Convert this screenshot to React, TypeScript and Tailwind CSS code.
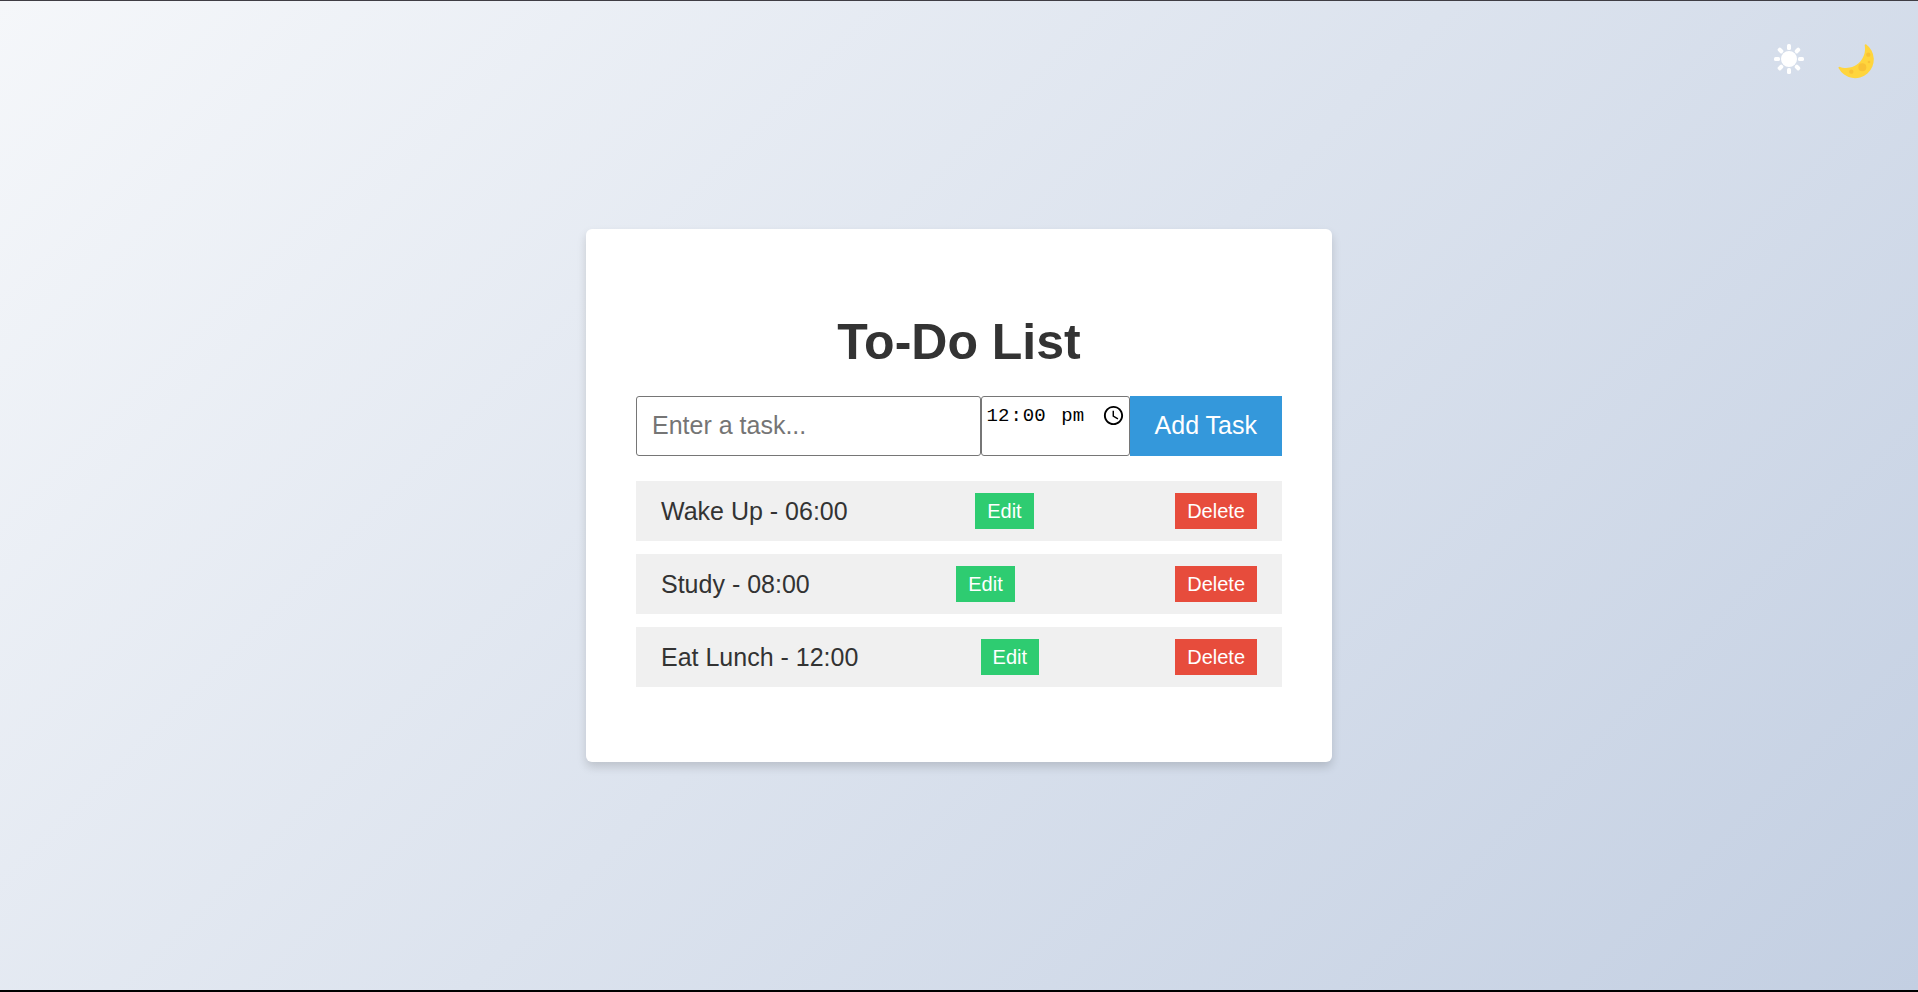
import { useState } from "react";
import type { FormEvent } from "react";

type Task = { id: number; name: string; time: string };

const initialTasks: Task[] = [
  { id: 1, name: "Wake Up", time: "06:00" },
  { id: 2, name: "Study", time: "08:00" },
  { id: 3, name: "Eat Lunch", time: "12:00" },
];

const rayAngles = [0, 45, 90, 135, 180, 225, 270, 315];

function SunIcon() {
  return (
    <svg viewBox="0 0 30 30" className="size-[30px]" aria-hidden="true">
      <circle cx="15" cy="15" r="8" fill="white" />
      {rayAngles.map((angle) => (
        <rect
          key={angle}
          x="13"
          y="0"
          width="4"
          height="6"
          rx="1.6"
          fill="white"
          transform={`rotate(${angle} 15 15)`}
        />
      ))}
    </svg>
  );
}

function MoonIcon() {
  return (
    <svg viewBox="294 130 114 105" className="h-[35px] w-[38px]" aria-hidden="true">
      <path
        d="M381 131 A56 56 0 1 1 299 203 Q297 197 303 199 A57 57 0 0 0 377 134 Q378 130 381 131 Z"
        fill="#ffd53d"
      />
      <circle cx="370" cy="200" r="12" fill="#f9c235" />
      <circle cx="388" cy="162" r="6.500" fill="#f9c235" />
      <circle cx="390" cy="184" r="4" fill="#f9c235" />
      <circle cx="337" cy="213" r="6.500" fill="#f9c235" />
    </svg>
  );
}

export default function App() {
  const [tasks, setTasks] = useState(initialTasks);
  const [name, setName] = useState("");
  const [time, setTime] = useState("12:00");

  const addTask = (event: FormEvent) => {
    event.preventDefault();
    if (!name.trim()) return;
    setTasks([...tasks, { id: Date.now(), name: name.trim(), time }]);
    setName("");
  };

  const editTask = (task: Task) => {
    setName(task.name);
    setTime(task.time);
    setTasks(tasks.filter((other) => other.id !== task.id));
  };

  return (
    <div className="grid min-h-screen grid-rows-[1fr_auto_1fr] border-t border-b-2 border-t-[#3f3d44] border-b-black bg-[linear-gradient(135deg,#f5f7fa,#c3cfe2)] font-['Liberation_Sans',Arial,sans-serif] text-[#333333]">
      <header className="flex items-start justify-end gap-[33px] px-[43px] pt-[43px]">
        <button type="button" aria-label="Light mode" className="cursor-pointer">
          <SunIcon />
        </button>
        <button type="button" aria-label="Dark mode" className="cursor-pointer">
          <MoonIcon />
        </button>
      </header>

      <main className="mx-auto w-full max-w-[746px] rounded-md bg-white px-[50px] pt-[84px] pb-[75px] shadow-[0_5px_10px_rgba(0,0,0,0.15)]">
        <h1 className="mb-[25px] text-center text-[50px] leading-[58px] font-bold">To-Do List</h1>

        <form onSubmit={addTask} className="mb-[25px] flex h-[60px]">
          <input
            type="text"
            aria-label="Task"
            placeholder="Enter a task..."
            value={name}
            onChange={(event) => setName(event.target.value)}
            className="min-w-0 flex-1 rounded-[3px] border border-[#767676] bg-white px-[15px] text-[25px] placeholder:text-[#757575]"
          />
          <input
            type="time"
            aria-label="Time"
            value={time}
            onChange={(event) => setTime(event.target.value)}
            className="block w-[149px] rounded-[3px] border border-[#767676] bg-white px-1 pb-5 font-['Liberation_Mono',monospace] text-[19px] leading-7 text-black lowercase [&::-webkit-calendar-picker-indicator]:ml-[14px] [&::-webkit-calendar-picker-indicator]:p-0 [&::-webkit-calendar-picker-indicator]:text-[22px] [&::-webkit-datetime-edit]:min-w-[98px] [&::-webkit-datetime-edit-fields-wrapper]:min-w-[98px] [&::-webkit-datetime-edit-ampm-field]:ml-2 [&::-webkit-datetime-edit-ampm-field]:min-w-6"
          />
          <button
            type="submit"
            className="cursor-pointer bg-[#3498db] px-[25px] text-[25px] whitespace-nowrap text-white"
          >
            Add Task
          </button>
        </form>

        <ul className="flex flex-col gap-[13px]">
          {tasks.map((task) => (
            <li
              key={task.id}
              className="flex h-[60px] items-center justify-between bg-[#f0f0f0] px-[25px] text-[25px]"
            >
              <span className="pt-0.5">
                {task.name} - {task.time}
              </span>
              <button
                type="button"
                onClick={() => editTask(task)}
                className="mr-[14px] h-9 cursor-pointer bg-[#2ecc71] px-3 text-[20px] text-white"
              >
                Edit
              </button>
              <button
                type="button"
                onClick={() => setTasks(tasks.filter((other) => other.id !== task.id))}
                className="h-9 cursor-pointer bg-[#e74c3c] px-3 text-[20px] text-white"
              >
                Delete
              </button>
            </li>
          ))}
        </ul>
      </main>
    </div>
  );
}
